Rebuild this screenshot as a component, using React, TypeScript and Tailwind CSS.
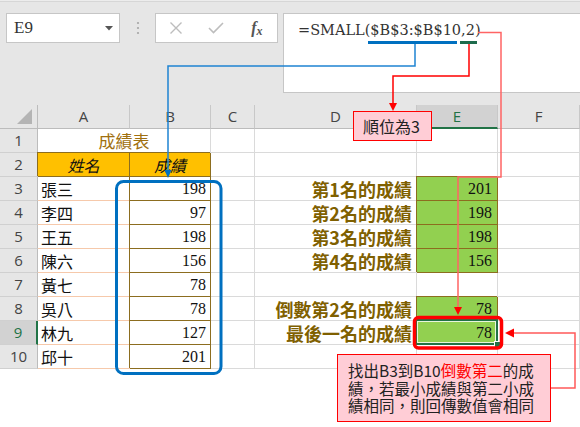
import React from 'react';

const names = ['張三', '李四', '王五', '陳六', '黃七', '吳八', '林九', '邱十'];
const scores = [198, 97, 198, 156, 78, 78, 127, 201];
const ranks: ({ label: string; value: number } | null)[] = [
  { label: '第1名的成績', value: 201 },
  { label: '第2名的成績', value: 198 },
  { label: '第3名的成績', value: 198 },
  { label: '第4名的成績', value: 156 },
  null,
  { label: '倒數第2名的成績', value: 78 },
  { label: '最後一名的成績', value: 78 },
  null,
];

const grid = 'border-r border-b border-[#dadada]';
const brown = 'border-r border-b border-[#8c6d1f] shadow-[-1px_-1px_0_#8c6d1f]';
const serifNum = "font-['Liberation_Serif',serif] text-[16px] text-[#111]";

function FormulaBar() {
  return (
    <div className="h-[105px] bg-[#e6e6e6]">
      <div className="h-px bg-[#ececec]" />
      <div className="h-px bg-[#d6d6d6]" />
      <div className="flex items-start pt-[11px]">
        <div className="ml-[6px] flex h-[30px] w-[114px] items-center justify-between border border-[#c6c6c6] bg-white pl-[7px] pr-[6px]">
          <span className="font-['Liberation_Serif',serif] text-[17px] text-[#333]">E9</span>
          <svg width="8" height="5" viewBox="0 0 8 5">
            <polygon points="0,0 8,0 4,4.5" fill="#555" />
          </svg>
        </div>
        <div className="flex h-[30px] w-[35px] items-center justify-center">
          <svg width="4" height="14" viewBox="0 0 4 14">
            <circle cx="2" cy="2" r="1.1" fill="#a6a6a6" />
            <circle cx="2" cy="7" r="1.1" fill="#a6a6a6" />
            <circle cx="2" cy="12" r="1.1" fill="#a6a6a6" />
          </svg>
        </div>
        <div className="flex h-[30px] w-[123px] items-center border border-[#c6c6c6] bg-white">
          <div className="flex w-[41px] justify-center">
            <svg width="14" height="14" viewBox="0 0 14 14">
              <path d="M1.5 1.5 L12.5 12.5 M12.5 1.5 L1.5 12.5" stroke="#bdbdbd" strokeWidth="1.4" />
            </svg>
          </div>
          <div className="flex w-[41px] justify-center">
            <svg width="16" height="12" viewBox="0 0 16 12">
              <path d="M1 6 L5.5 10.5 L15 1" stroke="#bdbdbd" strokeWidth="1.6" fill="none" />
            </svg>
          </div>
          <div className="flex w-[41px] justify-center font-['Liberation_Serif',serif] text-[16px] font-bold italic leading-none text-[#555]">
            f<span className="mt-[5px] text-[12px]">x</span>
          </div>
        </div>
        <div className="ml-[5px] h-[80px] flex-1 border border-r-0 border-[#c6c6c6] bg-white pl-[14px] pt-[6px] font-['DejaVu_Serif',serif] text-[14.5px] text-[#333]">
          =SMALL($B$3:$B$10,2)
        </div>
      </div>
    </div>
  );
}

function RowHead({ n }: { n: number }) {
  if (n === 9) {
    return (
      <div className="flex items-center justify-center border-r-2 border-b border-r-[#217346] border-b-[#d0d0d0] bg-[#d2d2d2] font-['Open_Sans',sans-serif] text-[15px] text-[#217346]">
        {n}
      </div>
    );
  }
  return (
    <div className="flex items-center justify-center border-r border-b border-r-[#bcbcbc] border-b-[#d0d0d0] bg-[#e6e6e6] font-['Open_Sans',sans-serif] text-[15px] text-[#444]">
      {n}
    </div>
  );
}

function Sheet() {
  const letters = ['A', 'B', 'C', 'D', 'E', 'F'];
  return (
    <div className="grid auto-rows-[24px] grid-cols-[38px_92px_81px_44px_162px_81px_82px] font-['Noto_Sans_CJK_TC',sans-serif]">
      <div className="relative border-r border-b border-[#bcbcbc] bg-[#e6e6e6]">
        <svg className="absolute bottom-[3px] right-[4px]" width="16" height="16" viewBox="0 0 16 16">
          <polygon points="15,0 15,15 0,15" fill="#b4b4b4" />
        </svg>
      </div>
      {letters.map((l) =>
        l === 'E' ? (
          <div key={l} className="flex items-center justify-center border-r border-b-2 border-r-[#c8c8c8] border-b-[#217346] bg-[#d2d2d2] font-['Open_Sans',sans-serif] text-[15px] text-[#217346]">
            {l}
          </div>
        ) : (
          <div key={l} className="flex items-center justify-center border-r border-b border-r-[#c8c8c8] border-b-[#bcbcbc] bg-[#e6e6e6] font-['Open_Sans',sans-serif] text-[15px] text-[#444]">
            {l}
          </div>
        ),
      )}

      {/* row 1 */}
      <RowHead n={1} />
      <div className={`col-span-2 flex items-center justify-center text-[17px] leading-none text-[#a07010] ${grid}`}>成績表</div>
      <div className={grid} />
      <div className={grid} />
      <div className={grid} />
      <div className={grid} />

      {/* row 2 */}
      <RowHead n={2} />
      <div className={`flex items-center justify-center bg-[#ffc000] text-[16px] italic leading-none text-[#111] ${brown}`}>姓名</div>
      <div className={`flex items-center justify-center bg-[#ffc000] text-[16px] italic leading-none text-[#111] ${brown}`}>成績</div>
      <div className={grid} />
      <div className={grid} />
      <div className={grid} />
      <div className={grid} />

      {names.map((name, i) => {
        const r = ranks[i];
        const row = i + 3;
        return (
          <React.Fragment key={name}>
            <RowHead n={row} />
            <div className="flex items-center border-r border-b border-[#f6c9ab] pl-[3px] text-[16px] leading-none text-[#111]">{name}</div>
            <div className={`flex items-center justify-end pr-[4px] ${serifNum} ${brown}`}>{scores[i]}</div>
            <div className={grid} />
            <div className={`flex items-center justify-end pr-[4px] text-[18px] font-bold leading-none text-[#7f6000] ${grid}`}>{r ? r.label : ''}</div>
            {r ? (
              row === 9 ? (
                <div className={`relative flex items-center justify-end bg-[#92d050] pr-[5px] ${serifNum} ${brown}`}>
                  <div className="absolute -left-[2px] -top-[2px] -right-px -bottom-px border-2 border-[#217346]">
                    <div className="absolute inset-0 border border-[#e8f5dc]" />
                  </div>
                  <div className="absolute -bottom-[4px] -right-[4px] h-[7px] w-[7px] border border-white bg-[#217346]" />
                  <span className="relative">{r.value}</span>
                </div>
              ) : (
                <div className={`flex items-center justify-end bg-[#92d050] pr-[5px] ${serifNum} ${brown}`}>{r.value}</div>
              )
            ) : (
              <div className={grid} />
            )}
            <div className={grid} />
          </React.Fragment>
        );
      })}
    </div>
  );
}

function Overlay() {
  return (
    <svg className="pointer-events-none absolute inset-0" width="580" height="427" viewBox="0 0 580 427">
      {/* blue range frame and connector */}
      <rect x="116.5" y="181.5" width="104.5" height="192" rx="7" fill="none" stroke="#0070c0" strokeWidth="3" />
      <rect x="368" y="41" width="89" height="3" fill="#0070c0" />
      <polyline points="415,44 415,66 168,66 168,171" fill="none" stroke="#1f84d2" strokeWidth="1.5" />
      <polygon points="164.5,170 171.5,170 168,178" fill="#0070c0" />

      {/* green underline under rank argument */}
      <rect x="460" y="41" width="17" height="3" fill="#1e6b4d" />
      <polyline points="469,44 469,76 393,76 393,104" fill="none" stroke="#ff0000" strokeWidth="1.5" />
      <polygon points="389,103 397,103 393,111" fill="#ff0000" />

      {/* formula to result */}
      <polyline points="478,32.5 501,32.5 501,177 458,177 458,308" fill="none" stroke="#ff6464" strokeWidth="1.5" />
      <polygon points="454,307 462,307 458,315" fill="#ff0000" />

      {/* result highlight */}
      <rect x="414.5" y="317.5" width="87" height="30.5" rx="4" fill="none" stroke="#ff0000" strokeWidth="3.5" />

      {/* note connector */}
      <polyline points="551,388 575,388 575,333 513,333" fill="none" stroke="#ff5a5a" strokeWidth="1.5" />
      <polygon points="514,328.5 514,337.5 505,333" fill="#ff0000" />
    </svg>
  );
}

export default function App() {
  return (
    <div className="relative h-[427px] w-[580px] overflow-hidden bg-white font-['Noto_Sans_CJK_TC',sans-serif]">
      <FormulaBar />
      <Sheet />
      <Overlay />
      <div className="absolute left-[353px] top-[111px] flex h-[30px] w-[79px] items-center border-[1.5px] border-[#ff0000] bg-[#ffcdd6] pl-[9px] text-[16px] leading-none text-[#222]">
        順位為3
      </div>
      <div className="absolute left-[337px] top-[354px] h-[68px] w-[214px] border-[1.5px] border-[#ff0000] bg-[#ffcdd6] pl-[10px] pt-[7px] text-[15.5px] leading-[17.5px] text-[#222]">
        找出B3到B10<span className="text-[#ff0000]">倒數第二</span>的成
        <br />
        績，若最小成績與第二小成
        <br />
        績相同，則回傳數值會相同
      </div>
    </div>
  );
}
